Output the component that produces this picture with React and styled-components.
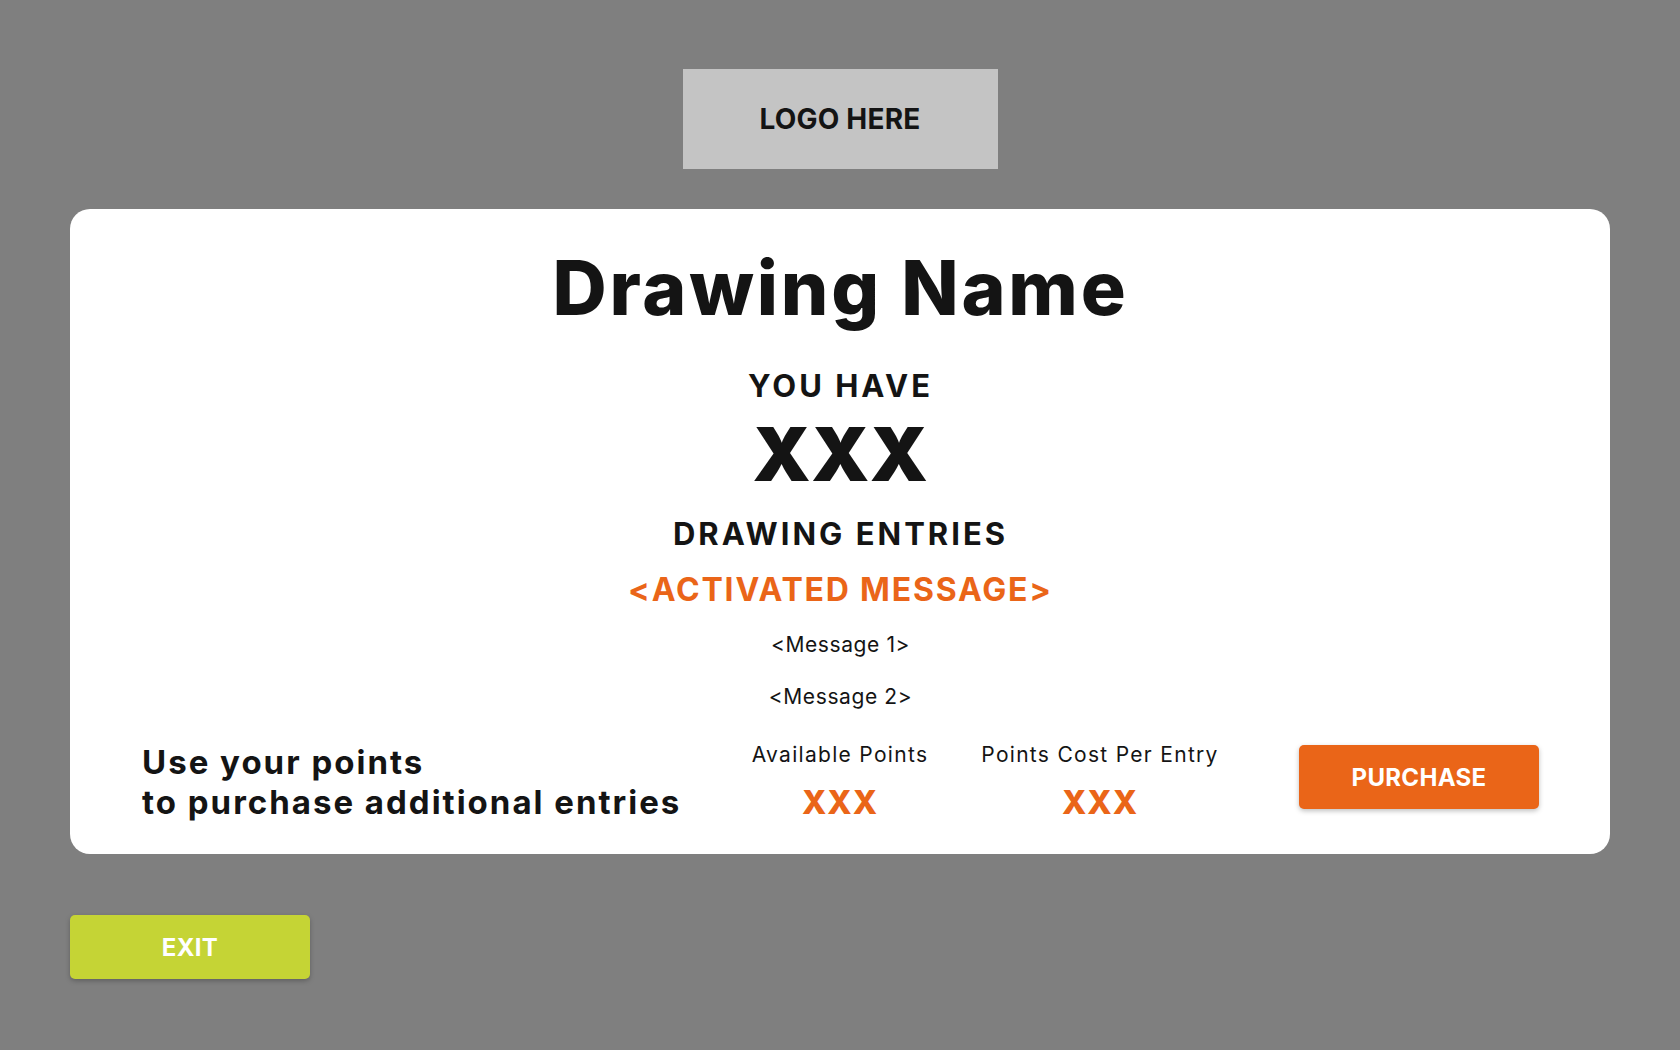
import React from 'react';
import styled, { createGlobalStyle } from 'styled-components';

const GlobalStyle = createGlobalStyle`
    html, body {
    margin: 0;
    padding: 0;
    background-color: #7f7f7f;
    }
    body {
    font-family: Inter, "Noto Sans", sans-serif;
    color: #141414;
    }
`;

const Page = styled.div`
    box-sizing: border-box;
    min-height: 1050px;
    padding: 69px 70px 40px;
    display: flex;
    flex-direction: column;
`;

const Logo = styled.div`
    align-self: center;
    width: 315px;
    height: 100px;
    background-color: #c4c4c4;
    display: flex;
    align-items: center;
    justify-content: center;
    font-size: 28px;
    font-weight: 700;
    letter-spacing: 0.2px;
    margin-bottom: 40px;
`;

const Card = styled.div`
    box-sizing: border-box;
    width: 1540px;
    height: 645px;
    background-color: #fff;
    border-radius: 20px;
    padding: 41px 71px 32px 72px;
    display: flex;
    flex-direction: column;
    align-items: center;
    text-align: center;
`;

const Title = styled.h1`
    margin: 0;
    font-size: 75px;
    line-height: 75px;
    font-weight: 800;
    letter-spacing: 2.8px;
`;

const Label = styled.div`
    margin-top: ${(p) => p.top}px;
    font-size: 31px;
    line-height: 36px;
    font-weight: 700;
    letter-spacing: ${(p) => p.spacing || 1}px;
`;

const BigCount = styled.div`
    margin-top: 13px;
    font-size: 74px;
    line-height: 74px;
    font-weight: 900;
    letter-spacing: 0.5px;
`;

const Activated = styled.div`
    margin-top: 20px;
    font-size: 32px;
    line-height: 36px;
    font-weight: 700;
    letter-spacing: 1.8px;
    color: #ea6518;
`;

const Message = styled.div`
    margin-top: ${(p) => p.top}px;
    font-size: 21px;
    line-height: 26px;
    font-weight: 400;
    letter-spacing: 0.6px;
`;

const BottomRow = styled.div`
    margin-top: 32px;
    width: 100%;
    display: grid;
    grid-template-columns: 598px 200px 320px 1fr;
    align-items: start;
`;

const Pitch = styled.div`
    text-align: left;
    font-size: 33px;
    line-height: 40px;
    font-weight: 700;
    letter-spacing: 2px;
`;

const Stat = styled.div`
    display: flex;
    flex-direction: column;
    align-items: center;
    gap: 17px;
`;

const StatLabel = styled.div`
    font-size: 21px;
    line-height: 26px;
    font-weight: 400;
    letter-spacing: 1.3px;
    white-space: nowrap;
`;

const StatValue = styled.div`
    font-size: 32px;
    line-height: 36px;
    font-weight: 800;
    letter-spacing: 1px;
    color: #ea6518;
`;

const Button = styled.button`
    width: 240px;
    height: 64px;
    border: none;
    border-radius: 5px;
    background-color: ${(p) => p.bg};
    color: #fff;
    font-family: Inter, "Noto Sans", sans-serif;
    font-size: 24px;
    font-weight: 700;
    letter-spacing: 0.3px;
    box-shadow: 0 2px 5px rgba(0, 0, 0, 0.25);
    cursor: pointer;
`;

const PurchaseButton = styled(Button)`
    justify-self: end;
    margin-top: 3px;
`;

const ExitButton = styled(Button)`
    margin-top: 61px;
`;

function App() {
    return (
        <Page>
            <GlobalStyle />
            <Logo>LOGO HERE</Logo>
            <Card>
                <Title>Drawing Name</Title>
                <Label top={43} spacing={3}>YOU HAVE</Label>
                <BigCount>XXX</BigCount>
                <Label top={25} spacing={3}>DRAWING ENTRIES</Label>
                <Activated>&lt;ACTIVATED MESSAGE&gt;</Activated>
                <Message top={24}>&lt;Message 1&gt;</Message>
                <Message top={26}>&lt;Message 2&gt;</Message>
                <BottomRow>
                    <Pitch>
                        Use your points
                        <br />
                        to purchase additional entries
                    </Pitch>
                    <Stat>
                        <StatLabel>Available Points</StatLabel>
                        <StatValue>XXX</StatValue>
                    </Stat>
                    <Stat>
                        <StatLabel>Points Cost Per Entry</StatLabel>
                        <StatValue>XXX</StatValue>
                    </Stat>
                    <PurchaseButton bg="#ea6518">PURCHASE</PurchaseButton>
                </BottomRow>
            </Card>
            <ExitButton bg="#c5d435">EXIT</ExitButton>
        </Page>
    );
}

export default App;
